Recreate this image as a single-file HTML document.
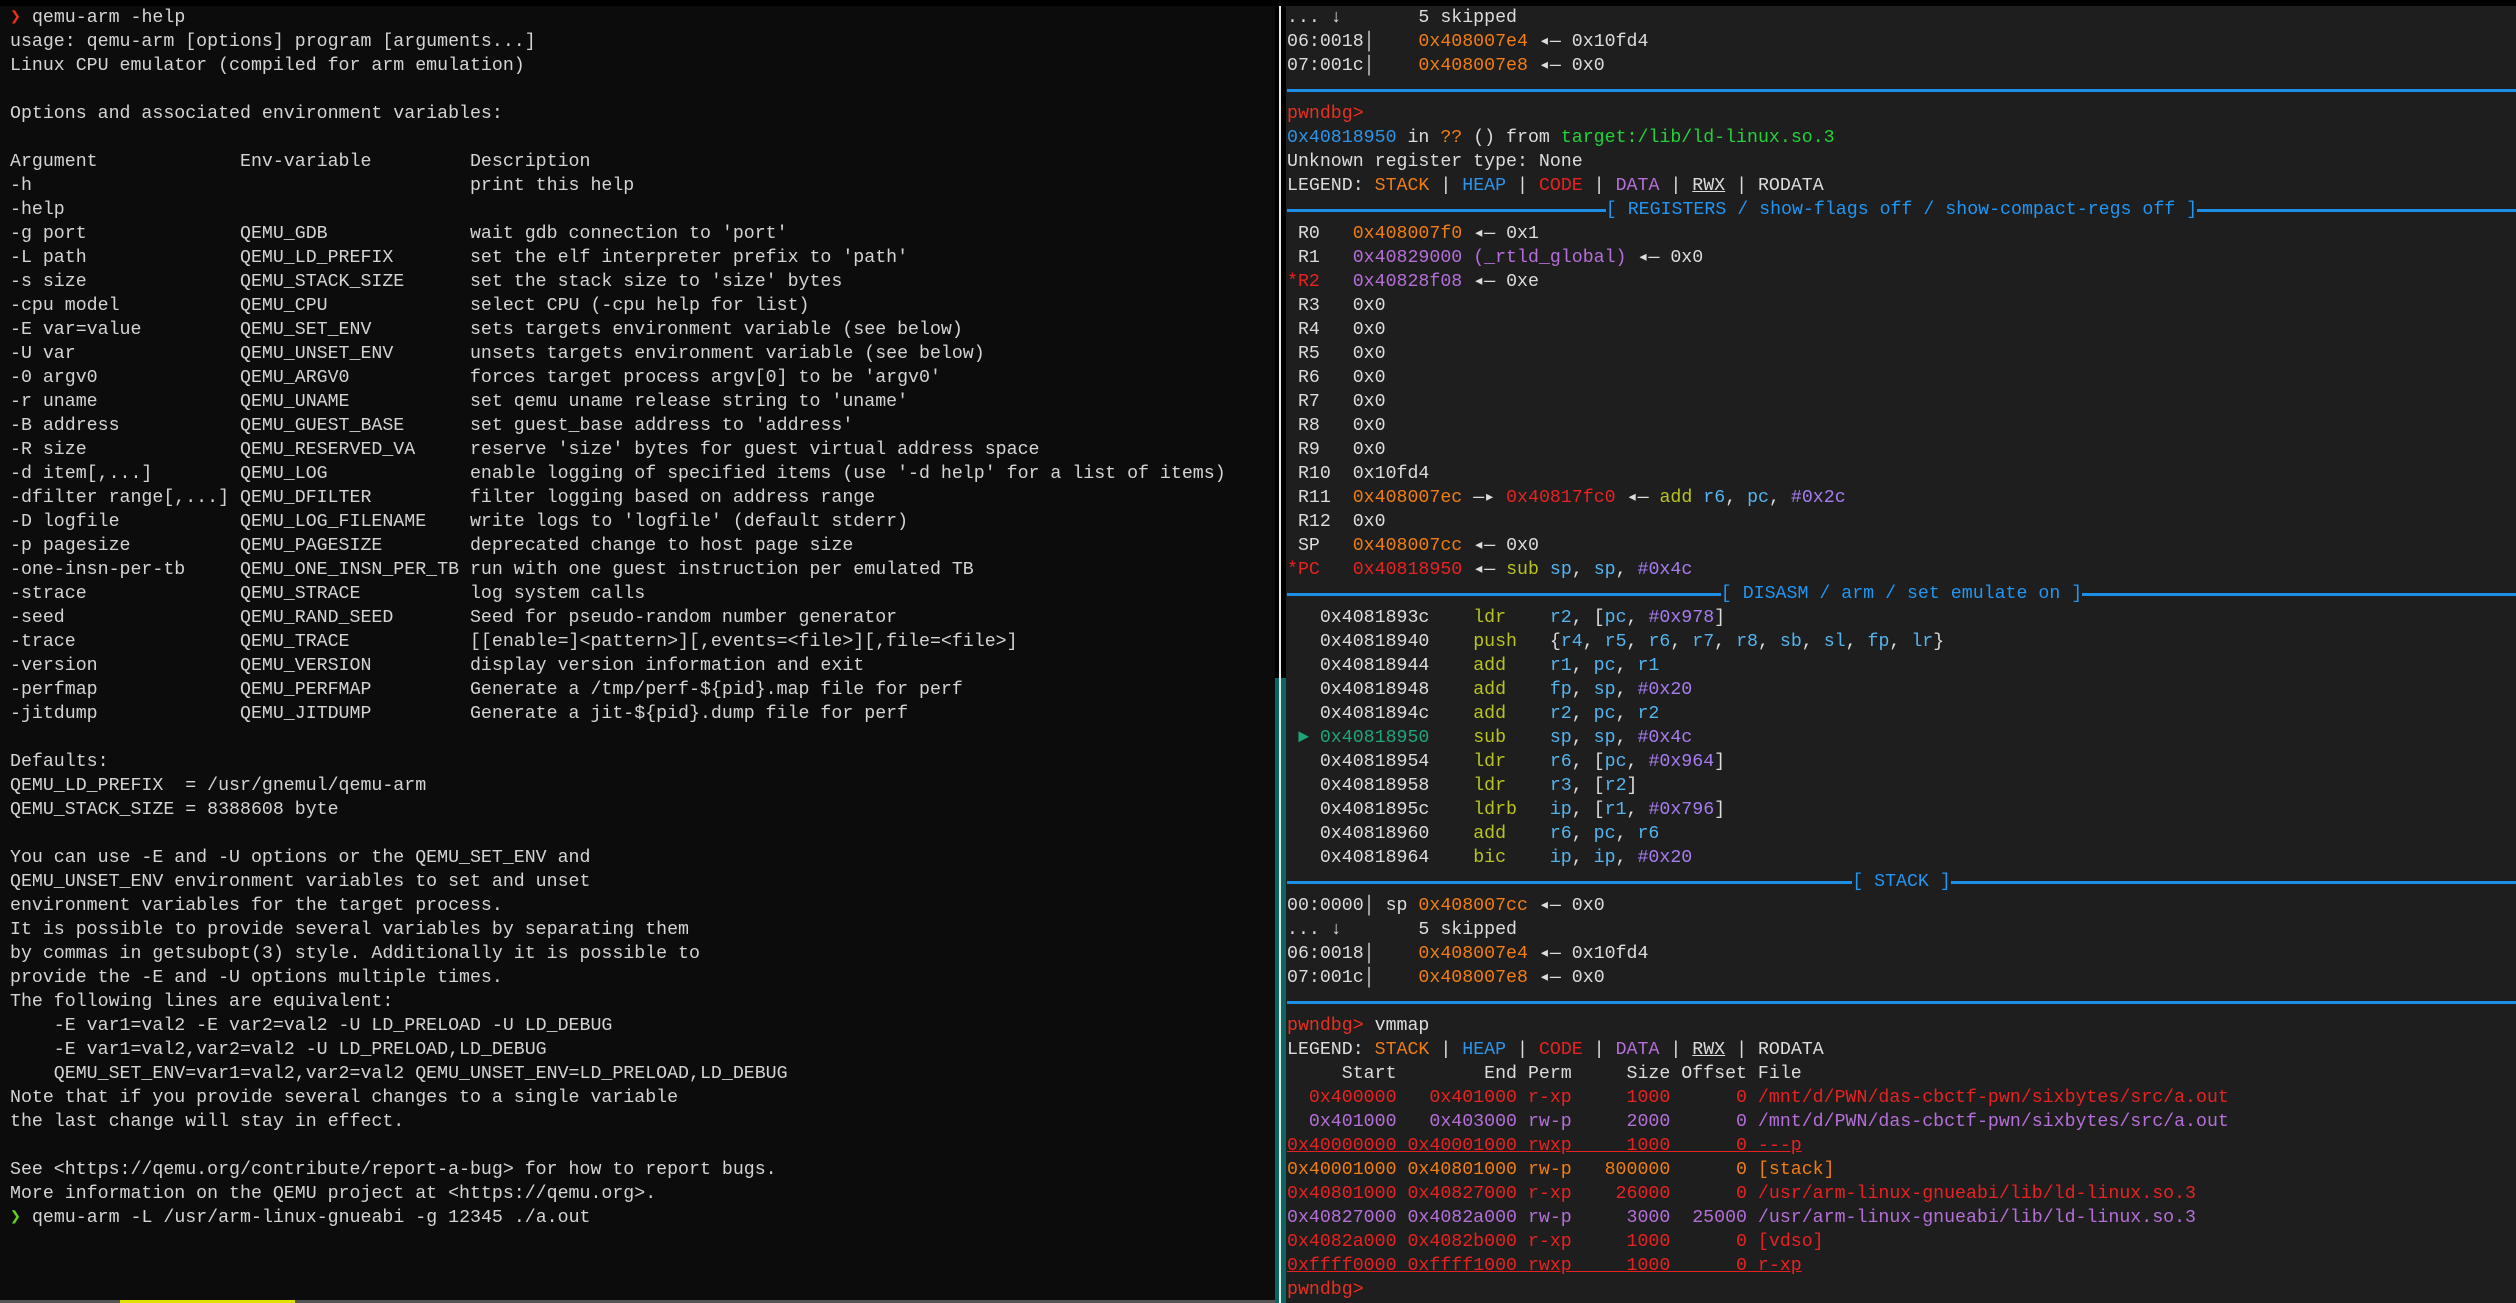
<!DOCTYPE html>
<html><head><meta charset="utf-8">
<style>
html,body{margin:0;padding:0;background:#000;width:2516px;height:1303px;overflow:hidden}
.pane{position:absolute;top:6px;bottom:0;font-family:"Liberation Mono","DejaVu Sans Mono",monospace;font-size:18.25px;line-height:24px;white-space:pre}
#left{left:0;width:1275px;background:#0c0c0c;color:#d4d4d4;padding-left:10px;box-sizing:border-box}
#right{left:1286px;right:0;background:#1e1e1e;color:#dcdcdc;padding-left:1px}
.strip{position:absolute;left:1275px;width:11px;top:678px;bottom:0;background:#0a6661}
.wl{position:absolute;left:1279px;width:2px;top:6px;bottom:0;background:#e8e8e8}
.r{height:24px}
.sep{height:24px;position:relative}
.sep::after{content:"";position:absolute;left:0;right:0;top:11px;height:3px;background:#1e8fe6}
.hd{height:24px;display:flex;align-items:center;color:#2196f3}
.hd i{flex:1;height:3px;background:#1e8fe6;margin-top:1px}
.o{color:#f07e14}.rd{color:#e82222}.p{color:#b46fd8}.b{color:#2c95ea}.g{color:#22d23a}
.y{color:#b9c41c}.lb{color:#55b4ee}.im{color:#a77cf0}.gr{color:#1ea57c}.u{text-decoration:underline}
.pr{color:#e83020}.cg{color:#66d01c}
.bot{position:absolute;left:0;top:1300px;width:1275px;height:3px;background:#555}
.boty{position:absolute;left:120px;top:1300px;width:175px;height:3px;background:#e0e000}
</style></head><body>
<div id="left" class="pane"><span class="pr">❯</span> qemu-arm -help
usage: qemu-arm [options] program [arguments...]
Linux CPU emulator (compiled for arm emulation)

Options and associated environment variables:

Argument             Env-variable         Description
-h                                        print this help
-help
-g port              QEMU_GDB             wait gdb connection to 'port'
-L path              QEMU_LD_PREFIX       set the elf interpreter prefix to 'path'
-s size              QEMU_STACK_SIZE      set the stack size to 'size' bytes
-cpu model           QEMU_CPU             select CPU (-cpu help for list)
-E var=value         QEMU_SET_ENV         sets targets environment variable (see below)
-U var               QEMU_UNSET_ENV       unsets targets environment variable (see below)
-0 argv0             QEMU_ARGV0           forces target process argv[0] to be 'argv0'
-r uname             QEMU_UNAME           set qemu uname release string to 'uname'
-B address           QEMU_GUEST_BASE      set guest_base address to 'address'
-R size              QEMU_RESERVED_VA     reserve 'size' bytes for guest virtual address space
-d item[,...]        QEMU_LOG             enable logging of specified items (use '-d help' for a list of items)
-dfilter range[,...] QEMU_DFILTER         filter logging based on address range
-D logfile           QEMU_LOG_FILENAME    write logs to 'logfile' (default stderr)
-p pagesize          QEMU_PAGESIZE        deprecated change to host page size
-one-insn-per-tb     QEMU_ONE_INSN_PER_TB run with one guest instruction per emulated TB
-strace              QEMU_STRACE          log system calls
-seed                QEMU_RAND_SEED       Seed for pseudo-random number generator
-trace               QEMU_TRACE           [[enable=]&lt;pattern&gt;][,events=&lt;file&gt;][,file=&lt;file&gt;]
-version             QEMU_VERSION         display version information and exit
-perfmap             QEMU_PERFMAP         Generate a /tmp/perf-${pid}.map file for perf
-jitdump             QEMU_JITDUMP         Generate a jit-${pid}.dump file for perf

Defaults:
QEMU_LD_PREFIX  = /usr/gnemul/qemu-arm
QEMU_STACK_SIZE = 8388608 byte

You can use -E and -U options or the QEMU_SET_ENV and
QEMU_UNSET_ENV environment variables to set and unset
environment variables for the target process.
It is possible to provide several variables by separating them
by commas in getsubopt(3) style. Additionally it is possible to
provide the -E and -U options multiple times.
The following lines are equivalent:
    -E var1=val2 -E var2=val2 -U LD_PRELOAD -U LD_DEBUG
    -E var1=val2,var2=val2 -U LD_PRELOAD,LD_DEBUG
    QEMU_SET_ENV=var1=val2,var2=val2 QEMU_UNSET_ENV=LD_PRELOAD,LD_DEBUG
Note that if you provide several changes to a single variable
the last change will stay in effect.

See &lt;https://qemu.org/contribute/report-a-bug&gt; for how to report bugs.
More information on the QEMU project at &lt;https://qemu.org&gt;.
<span class="cg">❯</span> qemu-arm -L /usr/arm-linux-gnueabi -g 12345 ./a.out</div>
<div class="strip"></div><div class="wl"></div>
<div id="right" class="pane"><div class="r">... ↓       5 skipped</div><div class="r">06:0018│    <span class="o">0x408007e4</span> ◂— 0x10fd4</div><div class="r">07:001c│    <span class="o">0x408007e8</span> ◂— 0x0</div><div class="sep"></div><div class="r"><span class="pr">pwndbg&gt;</span></div><div class="r"><span class="b">0x40818950</span> in <span class="o">??</span> () from <span class="g">target:/lib/ld-linux.so.3</span></div><div class="r">Unknown register type: None</div><div class="r">LEGEND: <span class="o">STACK</span> | <span class="b">HEAP</span> | <span class="rd">CODE</span> | <span class="p">DATA</span> | <span class="u">RWX</span> | RODATA</div><div class="hd"><i></i>[ REGISTERS / show-flags off / show-compact-regs off ]<i></i></div><div class="r"> R0   <span class="o">0x408007f0</span> ◂— 0x1</div><div class="r"> R1   <span class="p">0x40829000 (_rtld_global)</span> ◂— 0x0</div><div class="r"><span class="rd">*R2</span>   <span class="p">0x40828f08</span> ◂— 0xe</div><div class="r"> R3   0x0</div><div class="r"> R4   0x0</div><div class="r"> R5   0x0</div><div class="r"> R6   0x0</div><div class="r"> R7   0x0</div><div class="r"> R8   0x0</div><div class="r"> R9   0x0</div><div class="r"> R10  0x10fd4</div><div class="r"> R11  <span class="o">0x408007ec</span> —▸ <span class="rd">0x40817fc0</span> ◂— <span class="y">add</span> <span class="lb">r6</span>, <span class="lb">pc</span>, <span class="im">#0x2c</span></div><div class="r"> R12  0x0</div><div class="r"> SP   <span class="o">0x408007cc</span> ◂— 0x0</div><div class="r"><span class="rd">*PC</span>   <span class="rd">0x40818950</span> ◂— <span class="y">sub</span> <span class="lb">sp</span>, <span class="lb">sp</span>, <span class="im">#0x4c</span></div><div class="hd"><i></i>[ DISASM / arm / set emulate on ]<i></i></div><div class="r">   0x4081893c    <span class="y">ldr</span>    <span class="lb">r2</span>, [<span class="lb">pc</span>, <span class="im">#0x978</span>]</div><div class="r">   0x40818940    <span class="y">push</span>   {<span class="lb">r4</span>, <span class="lb">r5</span>, <span class="lb">r6</span>, <span class="lb">r7</span>, <span class="lb">r8</span>, <span class="lb">sb</span>, <span class="lb">sl</span>, <span class="lb">fp</span>, <span class="lb">lr</span>}</div><div class="r">   0x40818944    <span class="y">add</span>    <span class="lb">r1</span>, <span class="lb">pc</span>, <span class="lb">r1</span></div><div class="r">   0x40818948    <span class="y">add</span>    <span class="lb">fp</span>, <span class="lb">sp</span>, <span class="im">#0x20</span></div><div class="r">   0x4081894c    <span class="y">add</span>    <span class="lb">r2</span>, <span class="lb">pc</span>, <span class="lb">r2</span></div><div class="r"> <span class="gr">► 0x40818950</span>    <span class="y">sub</span>    <span class="lb">sp</span>, <span class="lb">sp</span>, <span class="im">#0x4c</span></div><div class="r">   0x40818954    <span class="y">ldr</span>    <span class="lb">r6</span>, [<span class="lb">pc</span>, <span class="im">#0x964</span>]</div><div class="r">   0x40818958    <span class="y">ldr</span>    <span class="lb">r3</span>, [<span class="lb">r2</span>]</div><div class="r">   0x4081895c    <span class="y">ldrb</span>   <span class="lb">ip</span>, [<span class="lb">r1</span>, <span class="im">#0x796</span>]</div><div class="r">   0x40818960    <span class="y">add</span>    <span class="lb">r6</span>, <span class="lb">pc</span>, <span class="lb">r6</span></div><div class="r">   0x40818964    <span class="y">bic</span>    <span class="lb">ip</span>, <span class="lb">ip</span>, <span class="im">#0x20</span></div><div class="hd"><i></i>[ STACK ]<i></i></div><div class="r">00:0000│ sp <span class="o">0x408007cc</span> ◂— 0x0</div><div class="r">... ↓       5 skipped</div><div class="r">06:0018│    <span class="o">0x408007e4</span> ◂— 0x10fd4</div><div class="r">07:001c│    <span class="o">0x408007e8</span> ◂— 0x0</div><div class="sep"></div><div class="r"><span class="pr">pwndbg&gt;</span> vmmap</div><div class="r">LEGEND: <span class="o">STACK</span> | <span class="b">HEAP</span> | <span class="rd">CODE</span> | <span class="p">DATA</span> | <span class="u">RWX</span> | RODATA</div><div class="r">     Start        End Perm     Size Offset File</div><div class="r rd">  0x400000   0x401000 r-xp     1000      0 /mnt/d/PWN/das-cbctf-pwn/sixbytes/src/a.out</div><div class="r p">  0x401000   0x403000 rw-p     2000      0 /mnt/d/PWN/das-cbctf-pwn/sixbytes/src/a.out</div><div class="r rd"><span class="u">0x40000000 0x40001000 rwxp     1000      0 ---p</span></div><div class="r o">0x40001000 0x40801000 rw-p   800000      0 [stack]</div><div class="r rd">0x40801000 0x40827000 r-xp    26000      0 /usr/arm-linux-gnueabi/lib/ld-linux.so.3</div><div class="r p">0x40827000 0x4082a000 rw-p     3000  25000 /usr/arm-linux-gnueabi/lib/ld-linux.so.3</div><div class="r rd">0x4082a000 0x4082b000 r-xp     1000      0 [vdso]</div><div class="r rd"><span class="u">0xffff0000 0xffff1000 rwxp     1000      0 r-xp</span></div><div class="r"><span class="pr">pwndbg&gt;</span></div></div>
<div class="bot"></div><div class="boty"></div>
</body></html>
